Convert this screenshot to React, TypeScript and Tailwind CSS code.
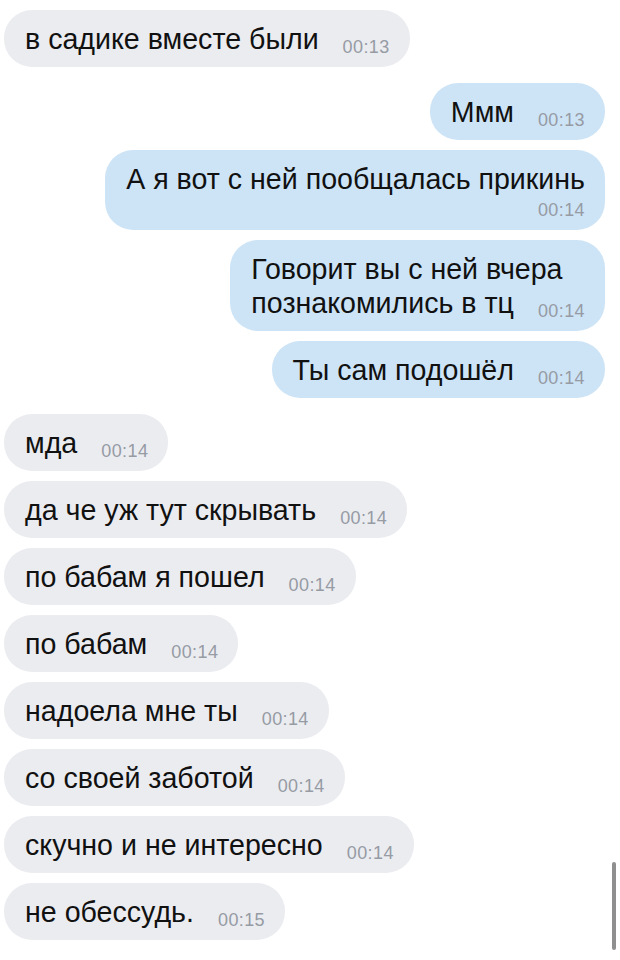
import React from "react";

type Msg = {
  lines: string[];
  time: string;
  out?: boolean;
  timeBelow?: boolean;
};

const messages: Msg[] = [
  { lines: ["в садике вместе были"], time: "00:13" },
  { lines: ["Ммм"], time: "00:13", out: true },
  { lines: ["А я вот с ней пообщалась прикинь"], time: "00:14", out: true, timeBelow: true },
  { lines: ["Говорит вы с ней вчера", "познакомились в тц"], time: "00:14", out: true },
  { lines: ["Ты сам подошёл"], time: "00:14", out: true },
  { lines: ["мда"], time: "00:14" },
  { lines: ["да че уж тут скрывать"], time: "00:14" },
  { lines: ["по бабам я пошел"], time: "00:14" },
  { lines: ["по бабам"], time: "00:14" },
  { lines: ["надоела мне ты"], time: "00:14" },
  { lines: ["со своей заботой"], time: "00:14" },
  { lines: ["скучно и не интересно"], time: "00:14" },
  { lines: ["не обессудь."], time: "00:15" },
];

const Bubble = ({ m }: { m: Msg }) => {
  return (
    <div
      className={`rounded-[28px] pl-[21px] pr-5 pt-3 pb-[11px] ${
        m.out ? "bg-[#cde4f7]" : "bg-[#ebecf0]"
      }`}
    >
      <div className="text-[28.6px] leading-[34px] text-[#111111] whitespace-nowrap">
        {m.lines.map((line, i) => (
          <span key={i}>
            {i > 0 && <br />}
            {line}
          </span>
        ))}
        {!m.timeBelow && (
          <span className="ml-6 align-[-4px] text-[18px] leading-[17px] tracking-[0.4px] text-[#969ba4]">
            {m.time}
          </span>
        )}
      </div>
      {m.timeBelow && (
        <div className="mt-[6px] text-right text-[18px] leading-[17px] tracking-[0.4px] text-[#969ba4]">
          {m.time}
        </div>
      )}
    </div>
  );
};

export default function App() {
  return (
    <div
      className="relative w-[620px] h-[960px] overflow-hidden bg-white"
      style={{ fontFamily: '"Liberation Sans", Arial, sans-serif' }}
    >
      <div className="flex flex-col pt-[10px] pl-1 pr-[15px]">
        {messages.map((m, i) => {
          const prev = messages[i - 1];
          const gap = !prev ? "" : prev.out !== m.out ? "mt-4" : "mt-[10px]";
          return (
            <div key={i} className={`flex ${m.out ? "justify-end" : "justify-start"} ${gap}`}>
              <Bubble m={m} />
            </div>
          );
        })}
      </div>

      {/* scroll indicator */}
      <div className="absolute left-[612px] top-[862px] h-[88px] w-1 rounded-full bg-[#8f8f8f]" />
    </div>
  );
}
